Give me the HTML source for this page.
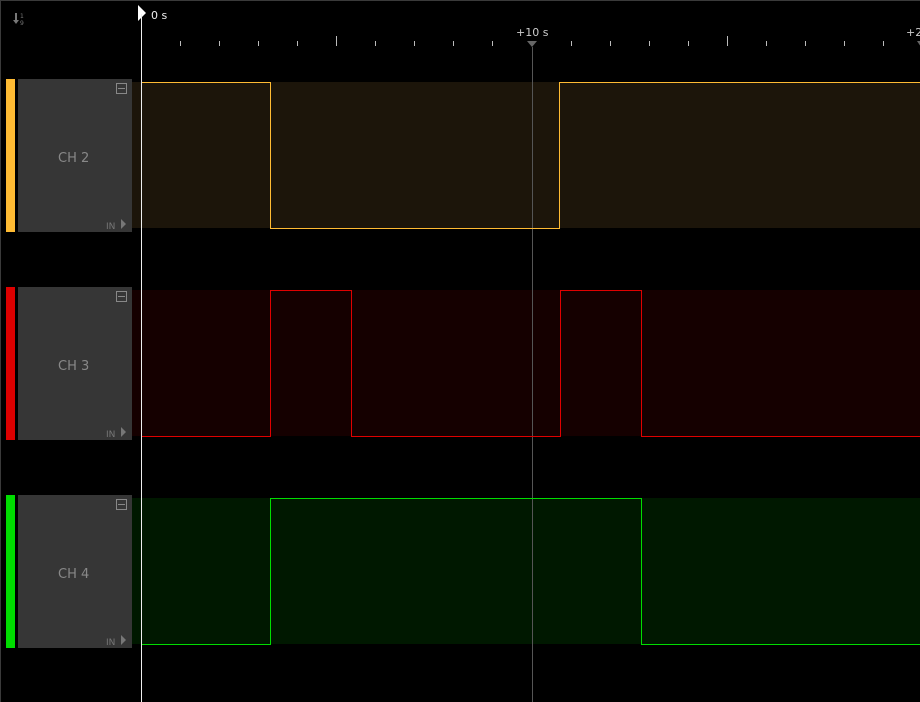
<!DOCTYPE html>
<html><head><style>
body{margin:0;width:920px;height:702px;background:#000;overflow:hidden;font-family:"DejaVu Sans","Liberation Sans",sans-serif}
</style></head><body>
<svg width="920" height="702" xmlns="http://www.w3.org/2000/svg" style="position:absolute;left:0;top:0;font-family:'DejaVu Sans','Liberation Sans',sans-serif">
<rect x="0" y="0" width="920" height="1" fill="#3a3a3a"/>
<rect x="0" y="0" width="1" height="702" fill="#3a3a3a"/>
<g fill="#777"><rect x="15" y="13" width="2" height="8"/><polygon points="13,20 19,20 16,24"/><text x="20" y="18" font-size="6">1</text><text x="20" y="25" font-size="6">9</text></g>
<g stroke="#bbb" stroke-width="1">
<line x1="180.5" y1="41" x2="180.5" y2="46"/><line x1="219.5" y1="41" x2="219.5" y2="46"/><line x1="258.5" y1="41" x2="258.5" y2="46"/><line x1="297.5" y1="41" x2="297.5" y2="46"/><line x1="336.5" y1="36" x2="336.5" y2="46"/><line x1="375.5" y1="41" x2="375.5" y2="46"/><line x1="414.5" y1="41" x2="414.5" y2="46"/><line x1="453.5" y1="41" x2="453.5" y2="46"/><line x1="492.5" y1="41" x2="492.5" y2="46"/><line x1="571.5" y1="41" x2="571.5" y2="46"/><line x1="610.5" y1="41" x2="610.5" y2="46"/><line x1="649.5" y1="41" x2="649.5" y2="46"/><line x1="688.5" y1="41" x2="688.5" y2="46"/><line x1="727.5" y1="36" x2="727.5" y2="46"/><line x1="766.5" y1="41" x2="766.5" y2="46"/><line x1="805.5" y1="41" x2="805.5" y2="46"/><line x1="844.5" y1="41" x2="844.5" y2="46"/><line x1="883.5" y1="41" x2="883.5" y2="46"/>
</g>
<text x="516" y="36" fill="#ccc" font-size="11">+10 s</text>
<text x="906" y="36" fill="#ccc" font-size="11">+2</text>
<polygon points="527,41 537,41 532,47" fill="#666"/>
<polygon points="917,41 925,41 921,47" fill="#666"/>
<text x="151" y="19" fill="#eee" font-size="11">0 s</text>
<polygon points="138,5 146,13 138,21" fill="#fff"/>
<rect x="132" y="82" width="788" height="146" fill="#1c150a"/>
<rect x="132" y="290" width="788" height="146" fill="#150000"/>
<rect x="132" y="498" width="788" height="146" fill="#001800"/>
<line x1="532.5" y1="47" x2="532.5" y2="702" stroke="#555"/>
<polyline points="141,82.5 270.5,82.5 270.5,228.5 559.5,228.5 559.5,82.5 920,82.5" fill="none" stroke="#ffbb33"/>
<polyline points="141,436.5 270.5,436.5 270.5,290.5 351.5,290.5 351.5,436.5 560.5,436.5 560.5,290.5 641.5,290.5 641.5,436.5 920,436.5" fill="none" stroke="#e00000"/>
<polyline points="141,644.5 270.5,644.5 270.5,498.5 641.5,498.5 641.5,644.5 920,644.5" fill="none" stroke="#00dd00"/>
<line x1="141.5" y1="14" x2="141.5" y2="702" stroke="#eee"/>
<g font-size="13" fill="#888">
<rect x="6" y="79" width="9" height="153" fill="#ffbb33"/>
<rect x="18" y="79" width="114" height="153" fill="#363636"/>
<text x="58" y="162">CH 2</text>
<rect x="6" y="287" width="9" height="153" fill="#dd0000"/>
<rect x="18" y="287" width="114" height="153" fill="#363636"/>
<text x="58" y="370">CH 3</text>
<rect x="6" y="495" width="9" height="153" fill="#00dd00"/>
<rect x="18" y="495" width="114" height="153" fill="#363636"/>
<text x="58" y="578">CH 4</text>
</g>
<g fill="none" stroke="#888">
<rect x="116.5" y="83.5" width="10" height="10"/><line x1="118" y1="88.5" x2="125" y2="88.5"/>
<rect x="116.5" y="291.5" width="10" height="10"/><line x1="118" y1="296.5" x2="125" y2="296.5"/>
<rect x="116.5" y="499.5" width="10" height="10"/><line x1="118" y1="504.5" x2="125" y2="504.5"/>
</g>
<g fill="#777" font-size="9">
<text x="106" y="229">IN</text><polygon points="121,219 126,224 121,229"/>
<text x="106" y="437">IN</text><polygon points="121,427 126,432 121,437"/>
<text x="106" y="645">IN</text><polygon points="121,635 126,640 121,645"/>
</g>
</svg>
</body></html>
